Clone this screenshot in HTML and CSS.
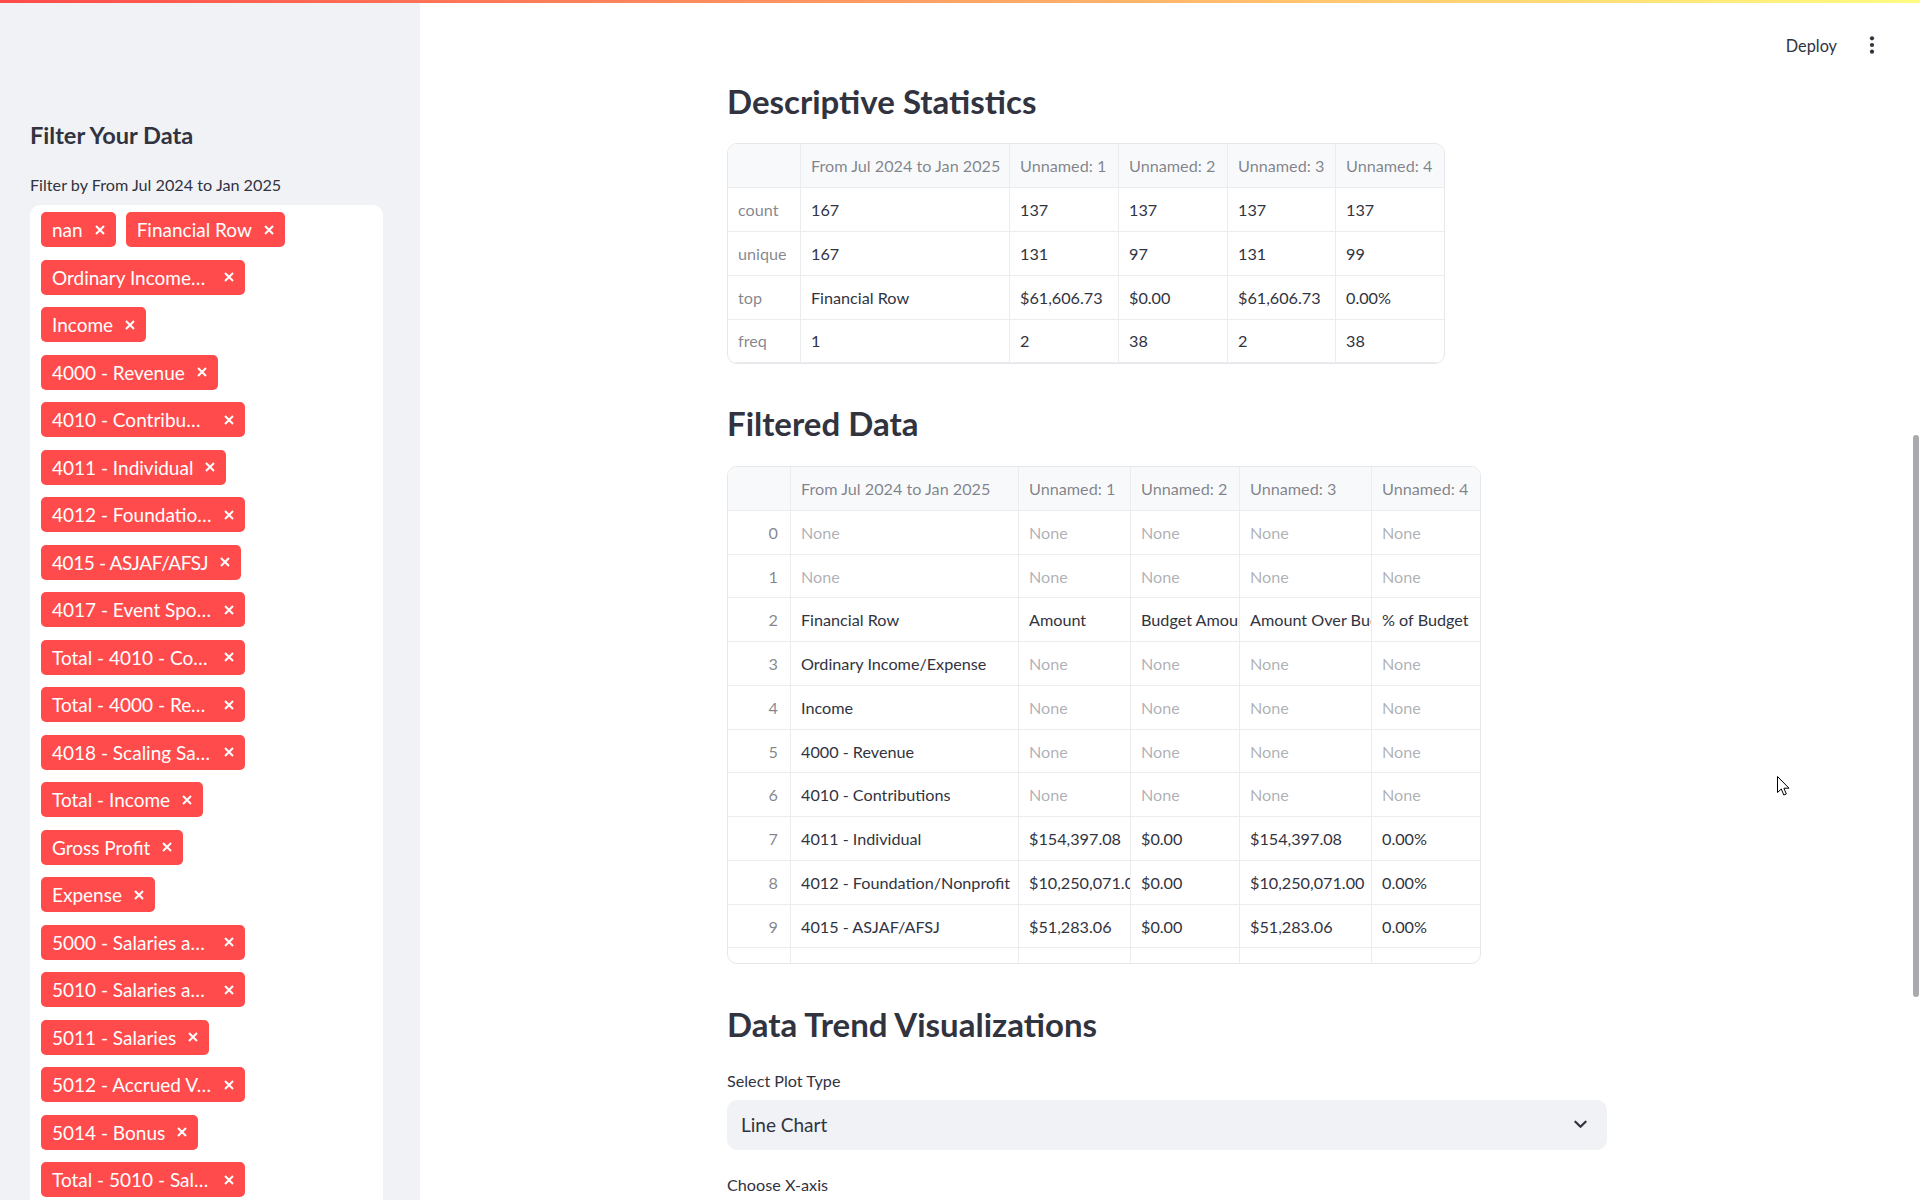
FILE: index.html
```html
<!DOCTYPE html>
<html lang="en">
<head>
<meta charset="utf-8">
<title>Financial Data Explorer</title>
<link rel="stylesheet" href="styles.css">
</head>
<body>
<div class="decoration"></div>
<div class="app">
  <aside class="sidebar">
    <h2 class="sb-title">Filter Your Data</h2>
    <div class="field-label">Filter by From Jul 2024 to Jan 2025</div>
    <div class="ms">
      <span class="tag"><span class="tag-text">nan</span><svg class="tag-x" viewBox="0 0 10 10"><path d="M1 1L9 9M9 1L1 9"/></svg></span>
      <span class="tag"><span class="tag-text">Financial Row</span><svg class="tag-x" viewBox="0 0 10 10"><path d="M1 1L9 9M9 1L1 9"/></svg></span>
      <span class="tag"><span class="tag-text">Ordinary Income/Expense</span><svg class="tag-x" viewBox="0 0 10 10"><path d="M1 1L9 9M9 1L1 9"/></svg></span>
      <span class="tag"><span class="tag-text">Income</span><svg class="tag-x" viewBox="0 0 10 10"><path d="M1 1L9 9M9 1L1 9"/></svg></span>
      <span class="tag"><span class="tag-text">4000 - Revenue</span><svg class="tag-x" viewBox="0 0 10 10"><path d="M1 1L9 9M9 1L1 9"/></svg></span>
      <span class="tag"><span class="tag-text">4010 - Contributions</span><svg class="tag-x" viewBox="0 0 10 10"><path d="M1 1L9 9M9 1L1 9"/></svg></span>
      <span class="tag"><span class="tag-text">4011 - Individual</span><svg class="tag-x" viewBox="0 0 10 10"><path d="M1 1L9 9M9 1L1 9"/></svg></span>
      <span class="tag"><span class="tag-text">4012 - Foundation/Nonprofit</span><svg class="tag-x" viewBox="0 0 10 10"><path d="M1 1L9 9M9 1L1 9"/></svg></span>
      <span class="tag"><span class="tag-text tag-text--full">4015 - ASJAF/AFSJ</span><svg class="tag-x" viewBox="0 0 10 10"><path d="M1 1L9 9M9 1L1 9"/></svg></span>
      <span class="tag"><span class="tag-text">4017 - Event Sponsorship</span><svg class="tag-x" viewBox="0 0 10 10"><path d="M1 1L9 9M9 1L1 9"/></svg></span>
      <span class="tag"><span class="tag-text">Total - 4010 - Contributions</span><svg class="tag-x" viewBox="0 0 10 10"><path d="M1 1L9 9M9 1L1 9"/></svg></span>
      <span class="tag"><span class="tag-text">Total - 4000 - Revenue</span><svg class="tag-x" viewBox="0 0 10 10"><path d="M1 1L9 9M9 1L1 9"/></svg></span>
      <span class="tag"><span class="tag-text">4018 - Scaling Sales</span><svg class="tag-x" viewBox="0 0 10 10"><path d="M1 1L9 9M9 1L1 9"/></svg></span>
      <span class="tag"><span class="tag-text">Total - Income</span><svg class="tag-x" viewBox="0 0 10 10"><path d="M1 1L9 9M9 1L1 9"/></svg></span>
      <span class="tag"><span class="tag-text">Gross Profit</span><svg class="tag-x" viewBox="0 0 10 10"><path d="M1 1L9 9M9 1L1 9"/></svg></span>
      <span class="tag"><span class="tag-text">Expense</span><svg class="tag-x" viewBox="0 0 10 10"><path d="M1 1L9 9M9 1L1 9"/></svg></span>
      <span class="tag"><span class="tag-text">5000 - Salaries and Related</span><svg class="tag-x" viewBox="0 0 10 10"><path d="M1 1L9 9M9 1L1 9"/></svg></span>
      <span class="tag"><span class="tag-text">5010 - Salaries and Wages</span><svg class="tag-x" viewBox="0 0 10 10"><path d="M1 1L9 9M9 1L1 9"/></svg></span>
      <span class="tag"><span class="tag-text">5011 - Salaries</span><svg class="tag-x" viewBox="0 0 10 10"><path d="M1 1L9 9M9 1L1 9"/></svg></span>
      <span class="tag"><span class="tag-text">5012 - Accrued Vacation</span><svg class="tag-x" viewBox="0 0 10 10"><path d="M1 1L9 9M9 1L1 9"/></svg></span>
      <span class="tag"><span class="tag-text">5014 - Bonus</span><svg class="tag-x" viewBox="0 0 10 10"><path d="M1 1L9 9M9 1L1 9"/></svg></span>
      <span class="tag"><span class="tag-text">Total - 5010 - Salaries and Wages</span><svg class="tag-x" viewBox="0 0 10 10"><path d="M1 1L9 9M9 1L1 9"/></svg></span>
    </div>
  </aside>

  <main class="main">
    <div class="toolbar">
      <span class="deploy">Deploy</span>
      <svg class="kebab" viewBox="0 0 6 20"><circle cx="3" cy="3.3" r="2.1"/><circle cx="3" cy="10" r="2.1"/><circle cx="3" cy="16.7" r="2.1"/></svg>
    </div>

    <div class="block">
      <h3 class="h-main">Descriptive Statistics</h3>
      <div class="df df-stats">
        <table>
          <colgroup><col class="s0"><col class="s1"><col class="s2"><col class="s3"><col class="s4"><col class="s5"></colgroup>
          <thead>
            <tr><th></th><th>From Jul 2024 to Jan 2025</th><th>Unnamed: 1</th><th>Unnamed: 2</th><th>Unnamed: 3</th><th>Unnamed: 4</th></tr>
          </thead>
          <tbody>
            <tr><td class="rl">count</td><td>167</td><td>137</td><td>137</td><td>137</td><td>137</td></tr>
            <tr><td class="rl">unique</td><td>167</td><td>131</td><td>97</td><td>131</td><td>99</td></tr>
            <tr><td class="rl">top</td><td>Financial Row</td><td>$61,606.73</td><td>$0.00</td><td>$61,606.73</td><td>0.00%</td></tr>
            <tr><td class="rl">freq</td><td>1</td><td>2</td><td>38</td><td>2</td><td>38</td></tr>
          </tbody>
        </table>
      </div>

      <h3 class="h-main h-second">Filtered Data</h3>
      <div class="df df-data">
        <table>
          <colgroup><col class="d0"><col class="d1"><col class="d2"><col class="d3"><col class="d4"><col class="d5"></colgroup>
          <thead>
            <tr><th></th><th>From Jul 2024 to Jan 2025</th><th>Unnamed: 1</th><th>Unnamed: 2</th><th>Unnamed: 3</th><th>Unnamed: 4</th></tr>
          </thead>
          <tbody>
            <tr><td class="idx">0</td><td class="na">None</td><td class="na">None</td><td class="na">None</td><td class="na">None</td><td class="na">None</td></tr>
            <tr><td class="idx">1</td><td class="na">None</td><td class="na">None</td><td class="na">None</td><td class="na">None</td><td class="na">None</td></tr>
            <tr><td class="idx">2</td><td>Financial Row</td><td>Amount</td><td>Budget Amount</td><td>Amount Over Budget</td><td>% of Budget</td></tr>
            <tr><td class="idx">3</td><td>Ordinary Income/Expense</td><td class="na">None</td><td class="na">None</td><td class="na">None</td><td class="na">None</td></tr>
            <tr><td class="idx">4</td><td>Income</td><td class="na">None</td><td class="na">None</td><td class="na">None</td><td class="na">None</td></tr>
            <tr><td class="idx">5</td><td>4000 - Revenue</td><td class="na">None</td><td class="na">None</td><td class="na">None</td><td class="na">None</td></tr>
            <tr><td class="idx">6</td><td>4010 - Contributions</td><td class="na">None</td><td class="na">None</td><td class="na">None</td><td class="na">None</td></tr>
            <tr><td class="idx">7</td><td>4011 - Individual</td><td>$154,397.08</td><td>$0.00</td><td>$154,397.08</td><td>0.00%</td></tr>
            <tr><td class="idx">8</td><td>4012 - Foundation/Nonprofit</td><td>$10,250,071.00</td><td>$0.00</td><td>$10,250,071.00</td><td>0.00%</td></tr>
            <tr><td class="idx">9</td><td>4015 - ASJAF/AFSJ</td><td>$51,283.06</td><td>$0.00</td><td>$51,283.06</td><td>0.00%</td></tr>
            <tr><td class="idx">10</td><td>4017 - Event Sponsorship</td><td>$5,000.00</td><td>$0.00</td><td>$5,000.00</td><td>0.00%</td></tr>
          </tbody>
        </table>
      </div>

      <h3 class="h-main h-third">Data Trend Visualizations</h3>
      <div class="field-label main-label">Select Plot Type</div>
      <div class="select">
        <span class="select-value">Line Chart</span>
        <svg class="chev" viewBox="0 0 14 9"><path d="M1.5 1.5L7 7L12.5 1.5"/></svg>
      </div>
      <div class="field-label main-label next-label">Choose X-axis</div>
    </div>

    <div class="scroll-thumb"></div>
    <svg class="cursor" viewBox="0 0 13 20"><path d="M0.5 0.5V16.5L4.3 13L6.8 19L9.3 18L6.9 12.2H12L0.5 0.5Z"/></svg>
  </main>
</div>
</body>
</html>
```

FILE: styles.css
```css
* { box-sizing: border-box; }

html, body {
  margin: 0;
  padding: 0;
  height: 100%;
  overflow: hidden;
}

body {
  font-family: "Lato", "Noto Sans", sans-serif;
  color: #31333f;
  background: #ffffff;
}

.decoration {
  position: fixed;
  top: 0;
  left: 0;
  right: 0;
  height: 3px;
  background: linear-gradient(90deg, #ff4b4b, #fffd80);
  z-index: 10;
}

.app {
  display: flex;
  height: 100vh;
}

/* ---------- Sidebar ---------- */
.sidebar {
  flex: 0 0 420px;
  background: #f0f2f6;
  padding: 120px 37px 0 30px;
  overflow: hidden;
}

.sb-title {
  margin: 0;
  font-size: 23.6px;
  line-height: 30px;
  font-weight: 700;
  color: #31333f;
}

.field-label {
  font-size: 16.2px;
  line-height: 21px;
  color: #31333f;
}

.sidebar .field-label {
  margin-top: 24px;
}

.ms {
  margin-top: 10px;
  background: #ffffff;
  border-radius: 10px;
  padding: 7px 83px 20px 11px;
  display: flex;
  flex-wrap: wrap;
  align-items: flex-start;
  align-content: flex-start;
  column-gap: 10px;
  row-gap: 12.5px;
  min-height: 1100px;
}

.tag {
  display: inline-flex;
  align-items: center;
  gap: 12px;
  height: 35px;
  padding: 0 11px;
  background: #ff4b4b;
  color: #ffffff;
  border-radius: 5px;
  font-size: 19px;
  line-height: 35px;
  white-space: nowrap;
}

.tag-text {
  max-width: 160px;
  overflow: hidden;
  text-overflow: ellipsis;
  white-space: nowrap;
}

.tag-text--full {
  max-width: none;
  letter-spacing: -0.4px;
}

.tag-x {
  width: 10px;
  height: 10px;
  flex: none;
  fill: none;
  stroke: #ffffff;
  stroke-width: 2;
}

/* ---------- Main ---------- */
.main {
  flex: 1;
  position: relative;
  overflow: hidden;
  padding-right: 6px;
}

.toolbar {
  position: absolute;
  top: 0;
  right: 0;
  height: 90px;
  display: flex;
  align-items: center;
  gap: 32px;
  padding-right: 45px;
}

.deploy {
  font-size: 16.3px;
  color: #31333f;
}

.kebab {
  width: 6px;
  height: 20px;
  fill: #31333f;
}

.block {
  width: 880px;
  margin: 0 auto;
  padding-top: 81px;
}

.h-main {
  margin: 0;
  font-size: 33px;
  line-height: 40px;
  font-weight: 700;
  color: #31333f;
}

.h-second { margin-top: 38.6px; }
.h-third { margin-top: 39.8px; }

/* ---------- Data frames ---------- */
.df {
  border: 1px solid #e6e7ea;
  border-radius: 10px;
  overflow: hidden;
  background: #ffffff;
}

.df-stats {
  width: 718px;
  margin-top: 22.3px;
}

.df-data {
  width: 754px;
  height: 498px;
  margin-top: 23px;
}

.df table {
  border-collapse: separate;
  border-spacing: 0;
  table-layout: fixed;
  width: 100%;
}

.df th,
.df td {
  padding: 0 10px;
  font-size: 16.2px;
  font-weight: 400;
  text-align: left;
  white-space: nowrap;
  overflow: hidden;
  border-right: 1px solid #ebecef;
  border-bottom: 1px solid #ebecef;
  color: #31333f;
}

.df th:last-child,
.df td:last-child {
  border-right: none;
}

.df thead tr { height: 44px; }
.df tbody tr { height: 43.75px; }

.df th {
  background: #f8f9fb;
  color: rgba(49, 51, 63, 0.6);
}

.df td.rl { color: rgba(49, 51, 63, 0.6); }
.df td.idx {
  color: rgba(49, 51, 63, 0.6);
  text-align: right;
  padding-right: 12px;
}
.df td.na { color: rgba(49, 51, 63, 0.4); }

.s0 { width: 73px; }
.s1 { width: 209px; }
.s2 { width: 109px; }
.s3 { width: 109px; }
.s4 { width: 108px; }
.s5 { width: 108px; }

.d0 { width: 63px; }
.d1 { width: 228px; }
.d2 { width: 112px; }
.d3 { width: 109px; }
.d4 { width: 132px; }
.d5 { width: 108px; }

/* ---------- Select ---------- */
.main-label { margin-top: 26px; }
.next-label { margin-top: 24.7px; }

.select {
  margin-top: 9px;
  height: 50px;
  background: #f0f2f6;
  border-radius: 10px;
  display: flex;
  align-items: center;
  justify-content: space-between;
  padding: 0 20px 0 14px;
}

.select-value {
  font-size: 19px;
  color: #31333f;
}

.chev {
  width: 13px;
  height: 9px;
  fill: none;
  stroke: #31333f;
  stroke-width: 2.4;
  stroke-linecap: round;
  stroke-linejoin: round;
}

.scroll-thumb {
  position: absolute;
  right: 1px;
  top: 435px;
  width: 6px;
  height: 562px;
  border-radius: 3px;
  background: #a9a9ae;
}

.cursor {
  position: absolute;
  left: 1357px;
  top: 776px;
  width: 13px;
  height: 20px;
  fill: #ffffff;
  stroke: #000000;
  stroke-width: 1;
}
```
